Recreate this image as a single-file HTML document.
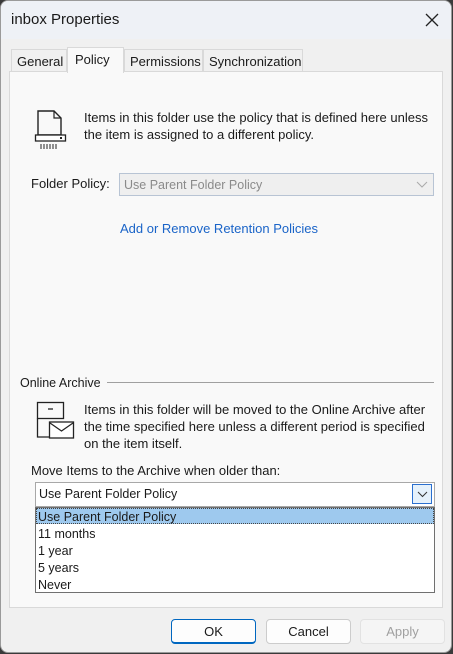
<!DOCTYPE html>
<html><head><style>
body{margin:0;width:453px;height:654px;background:#3a3a3a;font-family:"Liberation Sans",sans-serif;font-size:12px;color:#1a1a1a;overflow:hidden;position:relative}
.win{position:absolute;left:0;top:0;width:452px;height:653px;background:#f0f0f0;border:1px solid #9a9a9a;border-radius:8px;overflow:hidden;box-sizing:border-box}
.title{position:absolute;left:0;top:0;right:0;height:38px;background:#eef1f6}
.a{position:absolute;white-space:nowrap}
.tab{position:absolute;top:48px;height:22px;border:1px solid #d9d9d9;border-bottom:none;background:#f0f0f0;box-sizing:border-box;padding-left:5px;line-height:23px;font-size:13px}
.panel{position:absolute;left:8px;top:70px;width:434px;height:537px;background:#f9f9f9;border:1px solid #d9d9d9;box-sizing:border-box}
.btn{position:absolute;top:618px;height:25px;width:85px;border:1px solid #ccc;border-radius:4px;background:#fdfdfd;box-sizing:border-box;text-align:center;line-height:23px;font-size:13px}
</style></head><body><div class="win">
<div class="title"></div>
<div class="a" style="left:10px;top:10px;font-size:15px">inbox Properties</div>
<svg class="a" style="left:424px;top:12px" width="14" height="14"><path d="M1 1L13 13M13 1L1 13" stroke="#222" stroke-width="1.3"/></svg>
<div class="panel"></div>
<div class="tab" style="left:10px;width:56px">General</div>
<div class="tab" style="left:123px;width:79px">Permissions</div>
<div class="tab" style="left:202px;width:100px">Synchronization</div>
<div class="tab" style="left:66px;top:46px;width:57px;height:26px;background:#f9f9f9;line-height:24px;padding-left:7px">Policy</div>
<svg class="a" style="left:33px;top:108px" width="36" height="42"><path d="M4 2H20L27 9V26H4Z" fill="none" stroke="#222" stroke-width="1.4"/><path d="M20 2V9H27" fill="none" stroke="#222" stroke-width="1.2"/><rect x="1.5" y="26" width="30" height="6" fill="#fff" stroke="#222" stroke-width="1.3"/><path d="M7 35V40M10 35V40M13 35V40M16 35V40M19 35V40M22 35V40" stroke="#222"/><rect x="26" y="28" width="2" height="2" fill="#222"/></svg>
<div class="a" style="left:83px;top:108px;line-height:17px;font-size:13px">Items in this folder use the policy that is defined here unless<br>the item is assigned to a different policy.</div>
<div class="a" style="left:30px;top:175px;font-size:13px">Folder Policy:</div>
<div class="a" style="left:118px;top:172px;width:315px;height:23px;background:#efefef;border:1px solid #b8c4d4;box-sizing:border-box;color:#8a8a8a;padding-left:4px;line-height:22px;font-size:12.5px">Use Parent Folder Policy</div>
<svg class="a" style="left:415px;top:180px" width="12" height="8"><path d="M1 1L6 6L11 1" fill="none" stroke="#aaa"/></svg>
<div class="a" style="left:119px;top:220px;color:#1a64c8;font-size:13px">Add or Remove Retention Policies</div>
<div class="a" style="left:19px;top:375px;font-size:12.5px">Online Archive</div>
<div class="a" style="left:106px;top:381px;width:327px;height:1px;background:#a0a0a0"></div>
<svg class="a" style="left:35px;top:400px" width="40" height="42"><rect x="1.5" y="1.5" width="26" height="16" fill="none" stroke="#222" stroke-width="1.3"/><path d="M1.5 17.5V36H13" fill="none" stroke="#222" stroke-width="1.3"/><path d="M12 8H17" stroke="#222" stroke-width="1.3"/><rect x="13.5" y="21" width="24" height="16" fill="#fff" stroke="#222" stroke-width="1.3"/><path d="M14 22L25.5 30L37 22" fill="none" stroke="#222" stroke-width="1.2"/></svg>
<div class="a" style="left:83px;top:400px;line-height:17px;font-size:13px">Items in this folder will be moved to the Online Archive after<br>the time specified here unless a different period is specified<br>on the item itself.</div>
<div class="a" style="left:30px;top:462px;font-size:13px">Move Items to the Archive when older than:</div>
<div class="a" style="left:34px;top:481px;width:400px;height:25px;background:#fff;border:1px solid #a8a8a8;box-sizing:border-box;padding-left:3px;line-height:23px;font-size:12.5px">Use Parent Folder Policy</div>
<div class="a" style="left:411px;top:483px;width:20px;height:20px;border:1px solid #2a6fcf;background:#e5f1fb;box-sizing:border-box"></div>
<svg class="a" style="left:416px;top:490px" width="11" height="7"><path d="M1 1L5.5 5.5L10 1" fill="none" stroke="#333"/></svg>
<div class="a" style="left:34px;top:506px;width:400px;height:86px;background:#fff;border:1px solid #707070;box-sizing:border-box"></div>
<div class="a" style="left:35px;top:507px;width:398px;height:16px;background:#9ec9ee;border:1px dotted #444;box-sizing:border-box"></div>
<div class="a" style="left:37px;top:508px;line-height:17px;font-size:12.5px">Use Parent Folder Policy<br>11 months<br>1 year<br>5 years<br>Never</div>
<div class="btn" style="left:170px;border:1px solid #0067c0;border-width:1px 1px 2px">OK</div>
<div class="btn" style="left:265px">Cancel</div>
<div class="btn" style="left:359px;color:#a0a0a0;border-color:#e2e2e2;background:#f5f5f5">Apply</div>
</div></body></html>
